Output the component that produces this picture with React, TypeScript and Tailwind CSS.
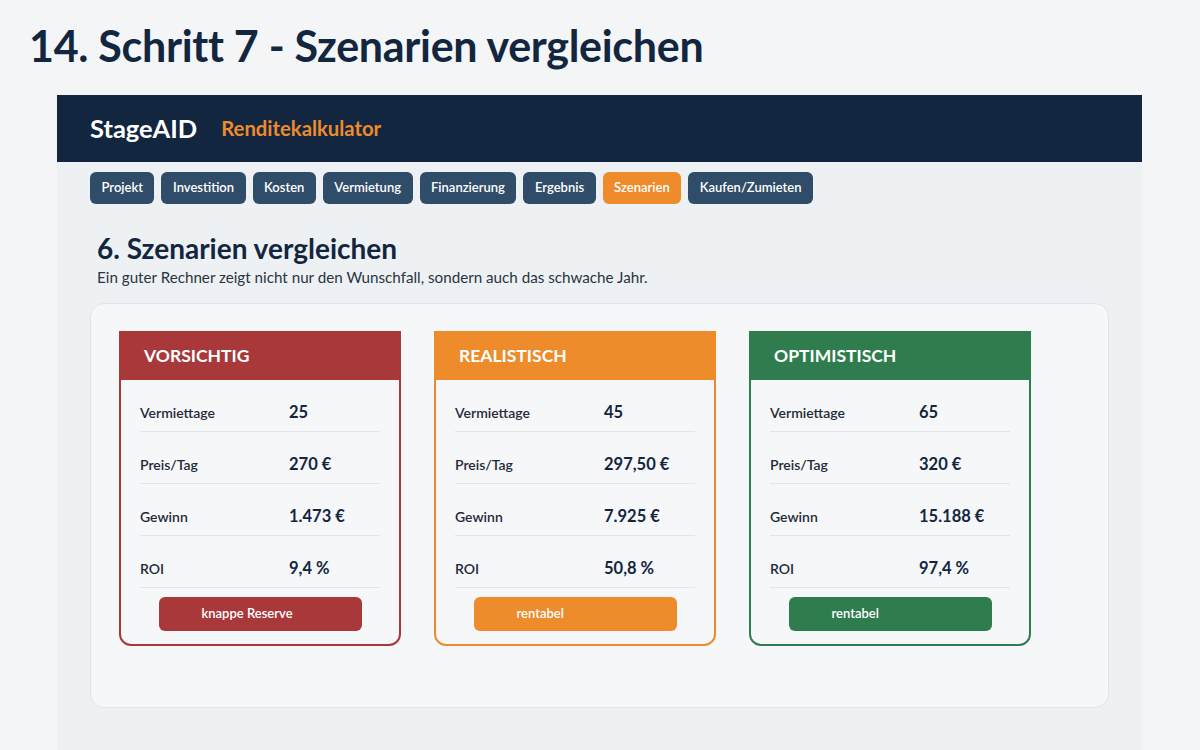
const tabs = [
  "Projekt",
  "Investition",
  "Kosten",
  "Vermietung",
  "Finanzierung",
  "Ergebnis",
  "Szenarien",
  "Kaufen/Zumieten",
];

interface Scenario {
  title: string;
  border: string;
  head: string;
  button: string;
  verdict: string;
  rows: [string, string][];
}

const scenarios: Scenario[] = [
  {
    title: "VORSICHTIG",
    border: "border-[#a8383a]",
    head: "bg-[#a8383a]",
    button: "bg-[#a8383a]",
    verdict: "knappe Reserve",
    rows: [
      ["Vermiettage", "25"],
      ["Preis/Tag", "270 €"],
      ["Gewinn", "1.473 €"],
      ["ROI", "9,4 %"],
    ],
  },
  {
    title: "REALISTISCH",
    border: "border-[#ee8b2b]",
    head: "bg-[#ee8b2b]",
    button: "bg-[#ee8b2b]",
    verdict: "rentabel",
    rows: [
      ["Vermiettage", "45"],
      ["Preis/Tag", "297,50 €"],
      ["Gewinn", "7.925 €"],
      ["ROI", "50,8 %"],
    ],
  },
  {
    title: "OPTIMISTISCH",
    border: "border-[#2f7d4f]",
    head: "bg-[#2f7d4f]",
    button: "bg-[#2f7d4f]",
    verdict: "rentabel",
    rows: [
      ["Vermiettage", "65"],
      ["Preis/Tag", "320 €"],
      ["Gewinn", "15.188 €"],
      ["ROI", "97,4 %"],
    ],
  },
];

function ScenarioCard({ s }: { s: Scenario }) {
  return (
    <div className={`w-[282px] overflow-hidden rounded-b-[12px] border-2 ${s.border} bg-[#f6f7f8]`}>
      <div className={`${s.head} flex h-[47px] items-center pl-[23px] text-[17.5px] font-bold text-white`}>
        {s.title}
      </div>
      <div className="px-[19px]">
        {s.rows.map(([label, value]) => (
          <div
            key={label}
            className="flex h-[52px] items-center border-b border-[#e2e5e8] pt-[14px]"
          >
            <span className="w-[149px] text-[14px] font-semibold text-[#1f2a3a]">{label}</span>
            <span className="text-[16.5px] font-bold text-[#13263f]">{value}</span>
          </div>
        ))}
      </div>
      <div className="flex justify-center pb-[13px] pt-[9px]">
        <div
          className={`${s.button} flex h-[34px] w-[203px] items-center rounded-[6px] pl-[43px] text-[13px] font-semibold text-white`}
        >
          {s.verdict}
        </div>
      </div>
    </div>
  );
}

export default function App() {
  return (
    <div className="h-[750px] overflow-hidden bg-[#f4f5f6] font-['Lato','Open_Sans',sans-serif]">
      <h1 className="px-[29px] pt-[21px] text-[43px] font-bold leading-[50px] tracking-[-0.3px] text-[#13263f]">
        14. Schritt 7 - Szenarien vergleichen
      </h1>

      <div className="mx-[57px] mt-[24px] w-[1085px] bg-[#edf1f4] pb-[60px]">
        <header className="flex h-[67px] items-center gap-[24px] bg-[#13263f] px-[33px]">
          <span className="text-[25.5px] font-bold text-white">StageAID</span>
          <span className="text-[20.3px] font-bold text-[#ee8b2b]">Renditekalkulator</span>
        </header>

        <nav className="flex gap-[7px] px-[33px] pt-[10px]">
          {tabs.map((t) => (
            <span
              key={t}
              className={`flex h-[32px] items-center rounded-[6px] px-[11.5px] text-[13px] font-semibold text-white ${
                t === "Szenarien" ? "bg-[#ee8b2b]" : "bg-[#2f4c68]"
              }`}
            >
              {t}
            </span>
          ))}
        </nav>

        <section className="px-[40px] pt-[27px]">
          <h2 className="text-[28px] font-bold leading-[34px] text-[#13263f]">6. Szenarien vergleichen</h2>
          <p className="mt-[1px] text-[15.2px] text-[#2b3440]">
            Ein guter Rechner zeigt nicht nur den Wunschfall, sondern auch das schwache Jahr.
          </p>
        </section>

        <div className="mx-[33px] mt-[14px] h-[405px] rounded-[14px] border border-[#e1e5e9] bg-[#f6f7f8] px-[28px] pt-[27px]">
          <div className="flex gap-[33px]">
            {scenarios.map((s) => (
              <ScenarioCard key={s.title} s={s} />
            ))}
          </div>
        </div>
      </div>
    </div>
  );
}
